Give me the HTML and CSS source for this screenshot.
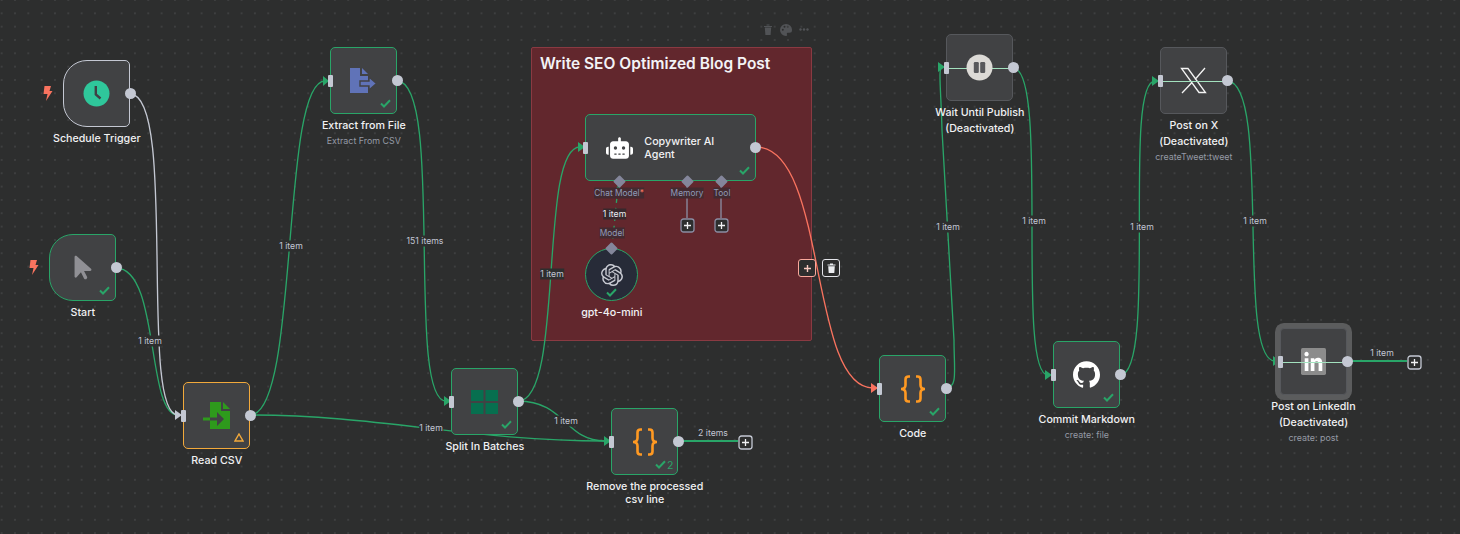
FILE: index.html
```html
<!DOCTYPE html>
<html lang="en">
<head>
    <meta charset="UTF-8">
    <title>Blog Post Workflow</title>
    <link rel="stylesheet" href="styles.css">
</head>
<body>
    <main class="canvas">
        <!-- sticky behind everything -->
        <section class="sticky">
            <h2>Write SEO Optimized Blog Post</h2>
        </section>
        <div class="sticky-tools">
            <svg width="10" height="11" viewBox="0 0 10 11"><path d="M1 2h8v1H1zM3.5 .5h3v1h-3zM1.8 3.5h6.4L7.6 11H2.4z"/></svg>
            <svg width="12" height="12" viewBox="0 0 12 12"><path fill-rule="evenodd" d="M6 0a6 6 0 0 0 0 12c1.200 0 1.400-.9 1-1.500-.5-.8 0-1.700 1-1.700h1.500A2.500 2.500 0 0 0 12 6.300 6 6 0 0 0 6 0zM2.800 6.700a1 1 0 1 1 0-2 1 1 0 0 1 0 2zM4.500 3.800a1 1 0 1 1 0-2 1 1 0 0 1 0 2zM7.800 3.800a1 1 0 1 1 0-2 1 1 0 0 1 0 2z"/></svg>
            <svg width="10" height="3" viewBox="0 0 10 3"><circle cx="1.5" cy="1.5" r="1.2"/><circle cx="5" cy="1.5" r="1.2"/><circle cx="8.5" cy="1.5" r="1.2"/></svg>
        </div>

        <!-- connections -->
        <svg class="edges" width="1460" height="534" viewBox="0 0 1460 534">
            <g class="edge-green">
                <path d="M116 268C160 268 146 415 178 415"/>
                <path d="M250 415C380 415 470 441 605 441"/>
                <path d="M250 415C300 415 280 81 325 81"/>
                <path d="M397 81C445 81 405 401 446 401"/>
                <path d="M518 401C565 401 538 147 580 147"/>
                <path d="M518 401C565 401 565 441 605 441"/>
                <path d="M946 388C958 388 954 370 954 340L942 130C941 90 938 67 942 67"/>
                <path d="M1013 68C1050 68 1015 375 1048 375"/>
                <path d="M1120 375C1158 375 1122 81 1155 81"/>
                <path d="M1227 81C1272 81 1235 361 1275 361"/>
            </g>
            <path class="edge-idle" d="M130 94C178 94 138 415 178 415"/>
            <path class="edge-red" d="M756 147C828 147 808 388 873 388"/>
            <path class="edge-thick" d="M678 441H738"/>
            <path class="edge-thick" d="M1347 361H1407"/>
            <path class="edge-dash" d="M618.5 181L612 248"/>
            <path class="edge-sub" d="M687 181V218"/>
            <path class="edge-sub" d="M721 181V218"/>
            <g class="arrow-green">
                <path d="M323 76L329 81L323 86Z"/>
                <path d="M444 396L451 401L444 406Z"/>
                <path d="M578 142L585 147L578 152Z"/>
                <path d="M604 436L611 441L604 446Z"/>
                <path d="M938 62L945 67L938 72Z"/>
                <path d="M1045 370L1052 375L1045 380Z"/>
                <path d="M1152 76L1159 81L1152 86Z"/>
                <path d="M1273 356L1280 361L1273 366Z"/>
                <path d="M618.5 185L622 190H615Z"/>
            </g>
            <path class="arrow-idle" d="M175 410L182 415L175 420Z"/>
            <path class="arrow-red" d="M871 383L878 388L871 393Z"/>
        </svg>

        <!-- edge labels -->
        <span class="edge-label el-start">1 item</span>
        <span class="edge-label el-read">1 item</span>
        <span class="edge-label el-extract">151 items</span>
        <span class="edge-label el-split">1 item</span>
        <span class="edge-label el-read2">1 item</span>
        <span class="edge-label el-split2">1 item</span>
        <span class="edge-label el-remove">2 items</span>
        <span class="edge-label el-code">1 item</span>
        <span class="edge-label el-wait">1 item</span>
        <span class="edge-label el-commit">1 item</span>
        <span class="edge-label el-x">1 item</span>
        <span class="edge-label el-linkedin">1 item</span>
        <span class="edge-label el-model on-sticky">1 item</span>

        <span class="port-label pl-chat on-sticky">Chat Model<b>*</b></span>
        <span class="port-label pl-memory on-sticky">Memory</span>
        <span class="port-label pl-tool on-sticky">Tool</span>
        <span class="port-label pl-model on-sticky">Model</span>

        <!-- trigger bolts -->
        <svg class="bolt bolt-schedule" viewBox="0 0 9 15"><path d="M1.5 0H8L6.500 5H9.500L3 15L4.500 8H0.500Z"/></svg>
        <svg class="bolt bolt-start" viewBox="0 0 9 15"><path d="M1.5 0H8L6.500 5H9.500L3 15L4.500 8H0.500Z"/></svg>

        <!-- nodes -->
        <article class="node n-schedule">
            <div class="box trigger idle">
                <svg class="icon" width="27" height="27" viewBox="0 0 27 27"><circle cx="13.5" cy="13.5" r="13" fill="#2fc79b"/><path d="M12.8 6V14.500L17.500 18.500" fill="none" stroke="#3f4044" stroke-width="2.4"/></svg>
                <i class="out"></i>
            </div>
            <p class="label">Schedule Trigger</p>
        </article>

        <article class="node n-start">
            <div class="box trigger">
                <svg class="icon" width="18" height="27" viewBox="0 0 320 512"><path fill="#909095" d="M0 55.2V426c0 12.2 9.9 22 22 22c6.3 0 12.4-2.7 16.5-7.5L121.2 346l58.1 116.3c7.9 15.8 27.1 22.2 42.9 14.3s22.2-27.1 14.3-42.9L179.8 320H297.9c12.2 0 22.1-9.9 22.1-22.1c0-6.3-2.7-12.3-7.4-16.5L38.6 37.9C34.3 34.1 28.9 32 23.2 32C10.4 32 0 42.4 0 55.2z"/></svg>
                <svg class="check" viewBox="0 0 11 9"><path d="M1 4.5L4 7.5L10 1.3"/></svg>
                <i class="out"></i>
            </div>
            <p class="label">Start</p>
        </article>

        <article class="node n-read">
            <div class="box warn">
                <i class="in"></i>
                <svg class="icon" width="27" height="27" viewBox="0 0 27 27"><path fill="#2e9a1c" d="M7 0H18V9H27V27H7Z"/><path fill="#2e9a1c" d="M20 0L27 7H20Z"/><path fill="#2e9a1c" d="M0 15.5H7V18.5H0Z"/><path fill="#414244" d="M7 15.5H16V18.5H7ZM14 10L21 17L14 24Z"/></svg>
                <svg class="warn-mark" viewBox="0 0 10 9"><path d="M5 1L9 8H1Z"/></svg>
                <i class="out"></i>
            </div>
            <p class="label">Read CSV</p>
        </article>

        <article class="node n-extract">
            <div class="box done">
                <i class="in"></i>
                <svg class="icon" width="27" height="25" viewBox="0 0 27 25"><path fill="#6073b8" d="M0 0H10V8H18V25H0Z"/><path fill="#6073b8" d="M12 0L18 6H12Z"/><path fill="#6073b8" stroke="#414244" stroke-width="1.4" d="M10 13H19V9L26.500 15.500L19 22V18H10Z"/></svg>
                <svg class="check" viewBox="0 0 11 9"><path d="M1 4.5L4 7.5L10 1.3"/></svg>
                <i class="out"></i>
            </div>
            <p class="label">Extract from File</p>
            <p class="sub">Extract From CSV</p>
        </article>

        <article class="node n-split">
            <div class="box done">
                <i class="in"></i>
                <svg class="icon" width="27" height="24" viewBox="0 0 27 24"><path fill="#076f4f" d="M0 0H12.5V11H0ZM14.5 0H27V11H14.5ZM0 13H12.5V24H0ZM14.5 13H27V24H14.5Z"/></svg>
                <svg class="check" viewBox="0 0 11 9"><path d="M1 4.5L4 7.5L10 1.3"/></svg>
                <i class="out"></i>
            </div>
            <p class="label">Split In Batches</p>
        </article>

        <article class="node n-remove">
            <div class="box done">
                <i class="in"></i>
                <svg class="icon" width="26" height="28" viewBox="0 0 26 28"><path class="brace" d="M10 1.500H8.500C6.500 1.500 5.500 2.500 5.500 4.500V10C5.500 12.500 4 14 1 14C4 14 5.500 15.500 5.500 18V23.500C5.500 25.500 6.500 26.500 8.500 26.500H10"/><path class="brace" d="M16 1.500H17.500C19.500 1.500 20.500 2.500 20.500 4.500V10C20.500 12.500 22 14 25 14C22 14 20.500 15.500 20.500 18V23.500C20.500 25.500 19.500 26.500 17.500 26.500H16"/></svg>
                <span class="run-count">2</span>
                <svg class="check check-count" viewBox="0 0 11 9"><path d="M1 4.5L4 7.5L10 1.3"/></svg>
                <i class="out"></i>
            </div>
            <p class="label">Remove the processed csv line</p>
        </article>

        <article class="node n-agent">
            <div class="box done agent">
                <i class="in"></i>
                <svg class="agent-icon" width="27" height="22" viewBox="0 0 640 512"><path fill="#fff" d="M320 0c17.7 0 32 14.3 32 32V96H472c39.8 0 72 32.2 72 72V440c0 39.8-32.2 72-72 72H168c-39.8 0-72-32.2-72-72V168c0-39.8 32.2-72 72-72H288V32c0-17.7 14.3-32 32-32zM208 384c-8.8 0-16 7.2-16 16s7.2 16 16 16h32c8.8 0 16-7.2 16-16s-7.2-16-16-16H208zm96 0c-8.8 0-16 7.2-16 16s7.2 16 16 16h32c8.8 0 16-7.2 16-16s-7.2-16-16-16H304zm96 0c-8.8 0-16 7.2-16 16s7.2 16 16 16h32c8.8 0 16-7.2 16-16s-7.2-16-16-16H400zM264 256a40 40 0 1 0 -80 0 40 40 0 1 0 80 0zm152 40a40 40 0 1 0 0-80 40 40 0 1 0 0 80zM48 224H64V416H48c-26.5 0-48-21.5-48-48V272c0-26.5 21.5-48 48-48zm544 0c26.5 0 48 21.5 48 48v96c0 26.5-21.5 48-48 48H576V224h16z"/></svg>
                <p class="agent-name">Copywriter AI Agent</p>
                <svg class="check" viewBox="0 0 11 9"><path d="M1 4.5L4 7.5L10 1.3"/></svg>
                <i class="out"></i>
                <i class="diamond d-chat"></i>
                <i class="diamond d-memory"></i>
                <i class="diamond d-tool"></i>
            </div>
        </article>
        <svg class="plus plus-memory" viewBox="0 0 15 15"><rect x="1" y="1" width="13" height="13" rx="2.5"/><path d="M7.5 4V11M4 7.5H11"/></svg>
        <svg class="plus plus-tool" viewBox="0 0 15 15"><rect x="1" y="1" width="13" height="13" rx="2.5"/><path d="M7.5 4V11M4 7.5H11"/></svg>

        <article class="node n-gpt">
            <div class="box round">
                <i class="diamond d-model"></i>
                <svg class="icon" width="22" height="22" viewBox="0 0 24 24"><path fill="#c8cad2" d="M22.282 9.821a5.985 5.985 0 0 0-.516-4.911 6.046 6.046 0 0 0-6.51-2.9A6.065 6.065 0 0 0 4.981 4.182a5.985 5.985 0 0 0-3.998 2.9 6.046 6.046 0 0 0 .743 7.097 5.98 5.98 0 0 0 .511 4.911 6.051 6.051 0 0 0 6.515 2.9A5.985 5.985 0 0 0 13.26 24a6.056 6.056 0 0 0 5.772-4.206 5.989 5.989 0 0 0 3.998-2.9 6.056 6.056 0 0 0-.748-7.073zm-9.022 12.608a4.476 4.476 0 0 1-2.876-1.041l.142-.08 4.778-2.758a.795.795 0 0 0 .393-.681v-6.737l2.02 1.169a.071.071 0 0 1 .038.052v5.583a4.504 4.504 0 0 1-4.495 4.494zm-9.661-4.125a4.471 4.471 0 0 1-.535-3.014l.142.085 4.783 2.758a.771.771 0 0 0 .781 0l5.843-3.369v2.333a.08.08 0 0 1-.033.061L9.74 19.95a4.499 4.499 0 0 1-6.141-1.646zM2.341 7.896a4.485 4.485 0 0 1 2.366-1.973V11.6a.766.766 0 0 0 .388.677l5.814 3.354-2.02 1.169a.076.076 0 0 1-.071 0l-4.83-2.787A4.504 4.504 0 0 1 2.341 7.872zm16.596 3.855L13.104 8.364 15.119 7.2a.076.076 0 0 1 .071 0l4.83 2.791a4.494 4.494 0 0 1-.676 8.105v-5.678a.79.79 0 0 0-.407-.667zm2.011-3.023l-.142-.085-4.774-2.782a.776.776 0 0 0-.785 0L9.409 9.23V6.897a.066.066 0 0 1 .028-.061l4.83-2.787a4.499 4.499 0 0 1 6.68 4.66zM8.307 12.863l-2.02-1.164a.08.08 0 0 1-.038-.057V6.074a4.499 4.499 0 0 1 7.376-3.454l-.142.081L8.704 5.459a.795.795 0 0 0-.393.681zm1.098-2.365l2.602-1.5 2.607 1.5v2.999l-2.597 1.5-2.607-1.5Z"/></svg>
                <svg class="check check-center" viewBox="0 0 11 9"><path d="M1 4.5L4 7.5L10 1.3"/></svg>
            </div>
            <p class="label">gpt-4o-mini</p>
        </article>

        <article class="node n-code">
            <div class="box done">
                <i class="in"></i>
                <svg class="icon" width="26" height="28" viewBox="0 0 26 28"><path class="brace" d="M10 1.500H8.500C6.500 1.500 5.500 2.500 5.500 4.500V10C5.500 12.500 4 14 1 14C4 14 5.500 15.500 5.500 18V23.500C5.500 25.500 6.500 26.500 8.500 26.500H10"/><path class="brace" d="M16 1.500H17.500C19.500 1.500 20.500 2.500 20.500 4.500V10C20.500 12.500 22 14 25 14C22 14 20.500 15.500 20.500 18V23.500C20.500 25.500 19.500 26.500 17.500 26.500H16"/></svg>
                <svg class="check" viewBox="0 0 11 9"><path d="M1 4.5L4 7.5L10 1.3"/></svg>
                <i class="out"></i>
            </div>
            <p class="label">Code</p>
        </article>

        <article class="node n-wait">
            <div class="box off">
                <i class="bypass"></i>
                <i class="in"></i>
                <svg class="icon pause" width="27" height="27" viewBox="0 0 27 27"><circle cx="13.5" cy="13.5" r="13" fill="#dcdad6"/><rect x="7.8" y="8" width="5" height="11" rx="1.2" fill="#58595c"/><rect x="14.2" y="8" width="5" height="11" rx="1.2" fill="#58595c"/></svg>
                <i class="out"></i>
            </div>
            <p class="label">Wait Until Publish (Deactivated)</p>
        </article>

        <article class="node n-commit">
            <div class="box done">
                <i class="in"></i>
                <svg class="icon" width="27" height="27" viewBox="0 0 24 24"><path fill="#fff" d="M12 .297c-6.63 0-12 5.373-12 12 0 5.303 3.438 9.8 8.205 11.385.6.113.82-.258.82-.577 0-.285-.01-1.04-.015-2.04-3.338.724-4.042-1.61-4.042-1.61C4.422 18.07 3.633 17.7 3.633 17.7c-1.087-.744.084-.729.084-.729 1.205.084 1.838 1.236 1.838 1.236 1.07 1.835 2.809 1.305 3.495.998.108-.776.417-1.305.76-1.605-2.665-.3-5.466-1.332-5.466-5.93 0-1.31.465-2.38 1.235-3.22-.135-.303-.54-1.523.105-3.176 0 0 1.005-.322 3.3 1.23.96-.267 1.98-.399 3-.405 1.02.006 2.04.138 3 .405 2.28-1.552 3.285-1.23 3.285-1.23.645 1.653.24 2.873.12 3.176.765.84 1.23 1.91 1.23 3.22 0 4.61-2.805 5.625-5.475 5.92.42.36.81 1.096.81 2.22 0 1.606-.015 2.896-.015 3.286 0 .315.21.69.825.57C20.565 22.092 24 17.592 24 12.297c0-6.627-5.373-12-12-12"/></svg>
                <svg class="check" viewBox="0 0 11 9"><path d="M1 4.5L4 7.5L10 1.3"/></svg>
                <i class="out"></i>
            </div>
            <p class="label">Commit Markdown</p>
            <p class="sub">create: file</p>
        </article>

        <article class="node n-x">
            <div class="box off">
                <svg class="icon" width="27" height="27" viewBox="0 0 27 27"><path fill="none" stroke="#f4f4f4" stroke-width="1.3" d="M1.500 1.500H8L25.500 25.500H19ZM25 1L15 12.500M12 15.500L2 26"/></svg>
                <i class="bypass"></i>
                <i class="in"></i>
                <i class="out"></i>
            </div>
            <p class="label">Post on X (Deactivated)</p>
            <p class="sub">createTweet:tweet</p>
        </article>

        <article class="node n-linkedin">
            <div class="box off ring">
                <svg class="icon" width="25" height="27" viewBox="0 0 24 24" preserveAspectRatio="none"><rect width="24" height="24" rx="1.5" fill="#8c8c8c"/><path fill="#fff" d="M20.447 20.452h-3.554v-5.569c0-1.328-.027-3.037-1.852-3.037-1.853 0-2.136 1.445-2.136 2.939v5.667H9.351V9h3.414v1.561h.046c.477-.9 1.637-1.85 3.37-1.85 3.601 0 4.267 2.37 4.267 5.455v6.286zM5.337 7.433c-1.144 0-2.063-.926-2.063-2.065 0-1.138.92-2.063 2.063-2.063 1.14 0 2.064.925 2.064 2.063 0 1.139-.925 2.065-2.064 2.065zm1.782 13.019H3.555V9h3.564v11.452z"/></svg>
                <i class="bypass"></i>
                <i class="in"></i>
                <i class="out"></i>
            </div>
            <p class="label">Post on LinkedIn (Deactivated)</p>
            <p class="sub">create: post</p>
        </article>

        <!-- open ends and edge toolbar -->
        <svg class="plus plus-remove" viewBox="0 0 15 15"><rect x="1" y="1" width="13" height="13" rx="2.5"/><path d="M7.5 4V11M4 7.5H11"/></svg>
        <svg class="plus plus-linkedin" viewBox="0 0 15 15"><rect x="1" y="1" width="13" height="13" rx="2.5"/><path d="M7.5 4V11M4 7.5H11"/></svg>
        <div class="edge-tools">
            <button class="tool-add"><svg width="9" height="9" viewBox="0 0 9 9"><path d="M4.5 1V8M1 4.5H8"/></svg></button>
            <button class="tool-del"><svg width="9" height="10" viewBox="0 0 9 10"><path class="trash" d="M0.5 1.5H3V0.5H6V1.5H8.500V2.500H0.500ZM1.200 3.300H7.800L7.300 10H1.700Z"/></svg></button>
        </div>
    </main>
</body>
</html>
```

FILE: styles.css
```css
* {
    box-sizing: border-box;
}

body {
    margin: 0;
    background: #2d2e2e;
    font-family: 'Inter', sans-serif;
    overflow: hidden;
}

p, h2 {
    margin: 0;
}

.canvas {
    position: relative;
    width: 1460px;
    height: 534px;
    overflow: hidden;
    background-color: #2d2e2e;
    background-image: radial-gradient(circle, #48494a 0.6px, transparent 0.8px);
    background-size: 13.333px 13.333px;
    background-position: -5px -6.67px;
}

/* sticky note */
.sticky {
    position: absolute;
    left: 531px;
    top: 47px;
    width: 281px;
    height: 294px;
    padding: 6px 8px;
    background: #62272d;
    border: 1px solid #8a3a42;
    border-radius: 2px;
}

.sticky h2 {
    font-size: 15.5px;
    font-weight: 600;
    line-height: 20px;
    color: #f3f3f6;
}

.sticky-tools {
    position: absolute;
    left: 763px;
    top: 24px;
    display: flex;
    align-items: center;
    gap: 7px;
    height: 11px;
}

.sticky-tools svg {
    fill: #515356;
}

/* edges */
.edges {
    position: absolute;
    left: 0;
    top: 0;
}

.edges path {
    fill: none;
    stroke-width: 1.33;
}

.edge-green path {
    stroke: #29a568;
}

.edges .edge-idle {
    stroke: #c4c8d3;
}

.edges .edge-red {
    stroke: #f9735f;
}

.edges .edge-thick {
    stroke: #29a568;
    stroke-width: 2;
}

.edges .edge-dash {
    stroke: #29a568;
    stroke-dasharray: 4 5;
}

.edges .edge-sub {
    stroke: #8b8da3;
}

.edges .arrow-green path {
    fill: #29a568;
    stroke: none;
}

.edges .arrow-idle {
    fill: #c4c8d3;
    stroke: none;
}

.edges .arrow-red {
    fill: #f9735f;
    stroke: none;
}

/* labels on edges */
.edge-label,
.port-label {
    position: absolute;
    transform: translate(-50%, -50%);
    font-size: 8.7px;
    line-height: 11px;
    white-space: nowrap;
    color: #c3c6d4;
    background: #2d2e2e;
}

.edge-label.on-sticky {
    background: #37282c;
    color: #eceef4;
}

.port-label {
    color: #8f9ab8;
    font-size: 8.4px;
}

.port-label.on-sticky {
    background: #432a30;
}

.port-label b {
    color: #f9735f;
    font-weight: 400;
}

.el-start { left: 150px; top: 341px; }
.el-read { left: 291px; top: 246px; }
.el-extract { left: 425px; top: 240.5px; }
.el-split { left: 552px; top: 273.5px; }
.el-read2 { left: 431px; top: 428px; }
.el-split2 { left: 566px; top: 421px; }
.el-remove { left: 713px; top: 433px; background: none; }
.el-code { left: 948px; top: 227px; }
.el-wait { left: 1034px; top: 221px; }
.el-commit { left: 1142px; top: 227px; }
.el-x { left: 1255px; top: 221px; }
.el-linkedin { left: 1382px; top: 352.5px; background: none; }
.el-model { left: 614.5px; top: 214px; }

.pl-chat { left: 619px; top: 193px; }
.pl-memory { left: 687px; top: 193px; }
.pl-tool { left: 722px; top: 193px; }
.pl-model { left: 612px; top: 233px; }

.bolt {
    position: absolute;
    width: 9px;
    height: 15px;
    overflow: visible;
    fill: #f9735f;
}

.bolt-schedule { left: 43px; top: 86px; }
.bolt-start { left: 29px; top: 260px; }

/* nodes */
.node {
    position: absolute;
    width: 67px;
    display: flex;
    flex-direction: column;
    align-items: center;
}

.n-schedule { left: 63.3px; top: 60.3px; }
.n-start { left: 49.3px; top: 234px; }
.n-read { left: 183.3px; top: 382.3px; }
.n-extract { left: 330.3px; top: 47.3px; }
.n-split { left: 451.3px; top: 368.3px; }
.n-remove { left: 611.3px; top: 408.3px; }
.n-agent { left: 585.3px; top: 114.3px; width: 170.5px; }
.n-gpt { left: 585.3px; top: 248.3px; width: 53px; }
.n-code { left: 879.3px; top: 355.3px; }
.n-wait { left: 946.3px; top: 34.3px; }
.n-commit { left: 1053.3px; top: 341.3px; }
.n-x { left: 1160.3px; top: 47.3px; }
.n-linkedin { left: 1280px; top: 328.3px; }

.box {
    position: relative;
    flex: none;
    width: 100%;
    height: 67px;
    display: flex;
    align-items: center;
    justify-content: center;
    background: #414244;
    border: 1px solid #56585c;
    border-radius: 5px;
}

.box.done,
.box.trigger {
    border-color: #29a568;
}

.box.trigger {
    border-radius: 24px 5px 5px 24px;
}

.box.idle {
    border-color: #c4c8d3;
}

.box.warn {
    border-color: #f2a93b;
}

.box.agent {
    justify-content: flex-start;
    padding-left: 20px;
    gap: 11px;
}

.box.round {
    height: 53px;
    border-radius: 50%;
    background: #272b38;
    border-color: #29a568;
}

.box.ring {
    box-shadow: 0 0 0 5px #5b5c5d;
    border-radius: 4px;
}

.icon {
    display: block;
}

.pause {
    position: relative;
    z-index: 1;
}

.in {
    position: absolute;
    left: -3px;
    top: 50%;
    width: 5px;
    height: 12px;
    margin-top: -6px;
    background: #c4c8d3;
    border-radius: 1px;
    z-index: 2;
}

.out {
    position: absolute;
    right: -6.5px;
    top: 50%;
    width: 11px;
    height: 11px;
    margin-top: -5.5px;
    background: #c4c8d3;
    border-radius: 50%;
    z-index: 2;
}

.bypass {
    position: absolute;
    left: 0;
    right: 0;
    top: 50%;
    height: 1.3px;
    background: #a3e2bf;
}

.check {
    position: absolute;
    right: 5px;
    bottom: 5px;
    width: 11px;
    height: 9px;
    fill: none;
    stroke: #29a568;
    stroke-width: 2;
}

.check-count {
    right: 11px;
}

.check-center {
    right: auto;
    left: 50%;
    margin-left: -5.5px;
    bottom: 3px;
}

.run-count {
    position: absolute;
    right: 4px;
    bottom: 3px;
    font-size: 10.5px;
    line-height: 11px;
    color: #29a568;
}

.warn-mark {
    position: absolute;
    right: 5px;
    bottom: 6px;
    width: 10px;
    height: 9px;
    fill: none;
    stroke: #f2a93b;
    stroke-width: 1.4;
}

.brace {
    fill: none;
    stroke: #ff9922;
    stroke-width: 2.6;
}

.agent-name {
    width: 90px;
    font-size: 10.7px;
    font-weight: 500;
    line-height: 13px;
    color: #f1f1f3;
}

.diamond {
    position: absolute;
    width: 9px;
    height: 9px;
    background: #84869b;
    transform: rotate(45deg);
    border-radius: 1px;
    z-index: 2;
}

.d-chat { left: 28.5px; bottom: -5.5px; }
.d-memory { left: 97px; bottom: -5.5px; }
.d-tool { left: 131px; bottom: -5.5px; }
.d-model { left: 21px; top: -5.5px; }

.label {
    width: 130px;
    margin-top: 3.5px;
    font-size: 10.7px;
    font-weight: 500;
    line-height: 16px;
    text-align: center;
    color: #f1f1f3;
}

.n-wait .label,
.n-x .label,
.n-linkedin .label {
    width: 100px;
}

.n-remove .label {
    width: 125px;
    line-height: 13px;
    margin-top: 5px;
}

.sub {
    width: 130px;
    font-size: 8.9px;
    line-height: 14px;
    text-align: center;
    color: #959aa5;
}

/* plus buttons */
.plus {
    position: absolute;
    width: 15px;
    height: 15px;
    fill: #2d2e2e;
    stroke: #c4c8d3;
    stroke-width: 1.3;
}

.plus path {
    stroke: #f1f1f3;
}

.plus-memory,
.plus-tool {
    stroke: #8b8da3;
}

.plus-memory { left: 679.5px; top: 217.5px; }
.plus-tool { left: 713.5px; top: 217.5px; }
.plus-remove { left: 737.5px; top: 434.5px; }
.plus-linkedin { left: 1407px; top: 354.5px; }

/* toolbar on hovered edge */
.edge-tools {
    position: absolute;
    left: 798px;
    top: 259px;
    display: flex;
    gap: 6px;
}

.edge-tools button {
    display: flex;
    align-items: center;
    justify-content: center;
    width: 18px;
    height: 18px;
    padding: 0;
    background: #2d2e2e;
    border: 1px solid #f9a99c;
    border-radius: 3px;
}

.edge-tools .tool-del {
    border-color: #e4e5ea;
}

.tool-add path {
    fill: none;
    stroke: #f9c9c0;
    stroke-width: 1.4;
}

.trash {
    fill: #eceef1;
}
```
